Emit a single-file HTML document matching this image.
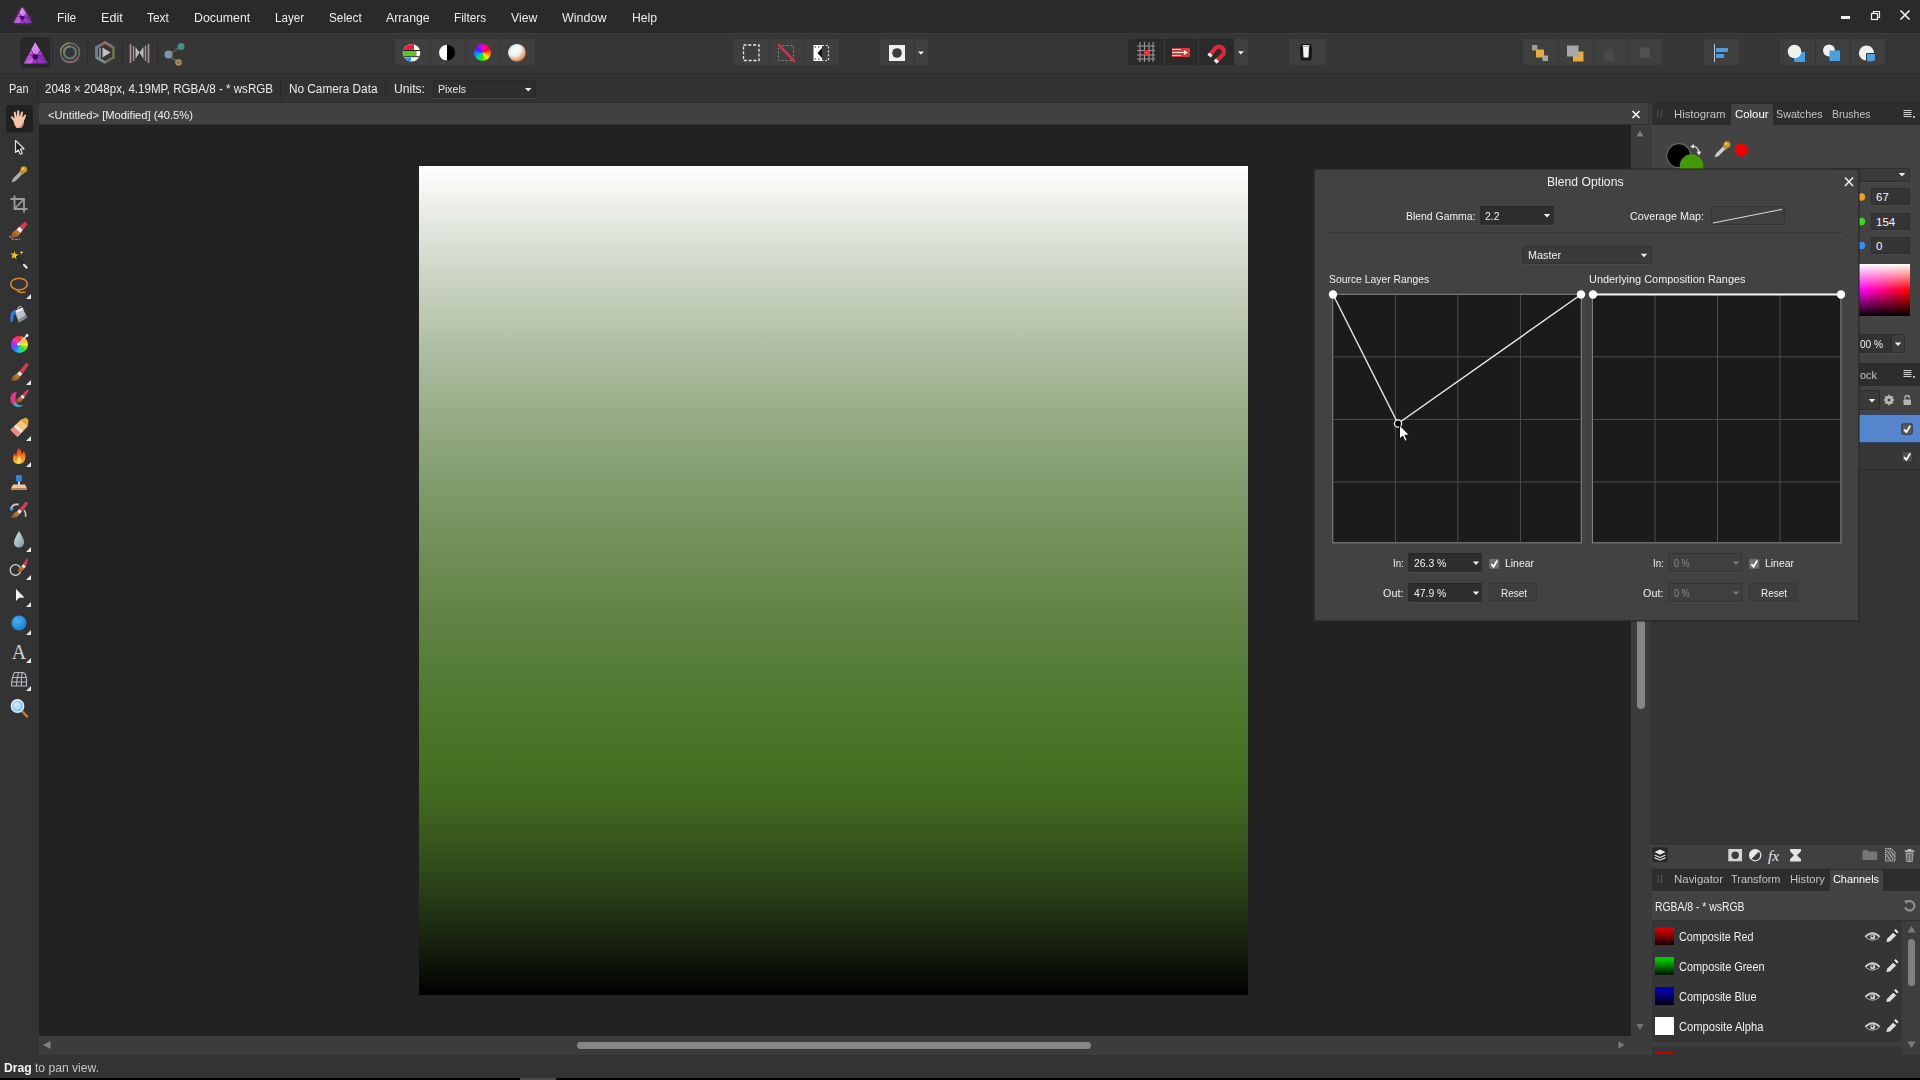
<!DOCTYPE html>
<html lang="en">
<head>
<meta charset="utf-8">
<title>Affinity Photo - Blend Options</title>
<style>
*{box-sizing:border-box;margin:0;padding:0}
html,body{width:1920px;height:1080px;overflow:hidden;background:#363636}
body{font-family:"Liberation Sans",sans-serif;font-size:12px;color:#e6e6e6;position:relative}
.abs{position:absolute}
svg{position:absolute;overflow:visible}
.t{position:absolute;white-space:nowrap;line-height:16px;height:16px;transform-origin:0 50%}
.m{top:10px;font-size:12px;color:#ececec}
#menubar{left:0;top:0;width:1920px;height:33px;background:#2a2a2a}
#toolbar{left:0;top:33px;width:1920px;height:41px;background:#363636;border-top:1px solid #3d3d3d;border-bottom:1px solid #2a2a2a}
#ctxbar{left:0;top:74px;width:1920px;height:29px;background:#323232;border-bottom:1px solid #2b2b2b}
#tools{left:0;top:103px;width:39px;height:952px;background:#333333}
#doctab{left:39px;top:103px;width:1609px;height:22px;background:#404040}
#view{left:39px;top:125px;width:1593px;height:911px;background:#222222}
#vscroll{left:1632px;top:125px;width:16px;height:911px;background:#3a3a3a}
#hscroll{left:39px;top:1036px;width:1609px;height:19px;background:#3a3a3a}
#canvas{left:419px;top:166px;width:829px;height:829px;background:linear-gradient(to bottom,rgb(255,255,255) 0%,rgb(245,247,243) 2.5%,rgb(235,238,232) 5%,rgb(225,231,221) 7.5%,rgb(216,223,210) 10%,rgb(207,216,200) 12.5%,rgb(198,209,189) 15%,rgb(189,202,179) 17.5%,rgb(181,196,170) 20%,rgb(173,189,161) 22.5%,rgb(166,184,152) 25%,rgb(158,178,143) 27.5%,rgb(151,172,135) 30%,rgb(144,167,127) 32.5%,rgb(138,162,119) 35%,rgb(132,158,112) 37.5%,rgb(126,153,104) 40%,rgb(120,149,98) 42.5%,rgb(115,145,91) 45%,rgb(109,141,85) 47.5%,rgb(104,138,79) 50%,rgb(100,134,73) 52.5%,rgb(95,131,67) 55%,rgb(91,128,62) 57.5%,rgb(86,125,57) 60%,rgb(82,122,52) 62.5%,rgb(79,120,47) 65%,rgb(75,118,42) 67.5%,rgb(72,115,38) 70%,rgb(69,113,34) 72.5%,rgb(65,108,32) 75%,rgb(62,100,32) 77.5%,rgb(57,92,31) 80%,rgb(52,83,29) 82.5%,rgb(47,73,27) 85%,rgb(41,62,24) 87.5%,rgb(34,51,20) 90%,rgb(26,39,16) 92.5%,rgb(18,27,11) 95%,rgb(9,14,6) 97.5%,rgb(0,0,0) 100%)}
#rpanel{left:1648px;top:103px;width:272px;height:952px;background:#3b3b3b}
#status{left:0;top:1055px;width:1920px;height:23px;background:#363636}
#bottom{left:0;top:1078px;width:1920px;height:2px;background:#000}
#dialog{left:1315px;top:170px;width:543px;height:450px;background:#424242;box-shadow:0 0 0 1px #2c2c2c}
.grp{position:absolute;top:5px;height:26px;background:#3f3f3f;border-radius:2px}
.grp.dk{background:#2a2a2a}
.sep{position:absolute;top:0;width:1px;height:26px;background:#363636}
.dk .sep{background:#3a3a3a}
.c{top:7px;font-size:12px;color:#ececec}
.dd{background:#2e2e2e;border:1px solid #282828;border-radius:2px;box-shadow:0 1px 0 #484848}
#doctab{left:39px;top:103px;width:1609px;height:22px;background:#414141;border-bottom:1px solid #2f2f2f}
#view{left:39px;top:125px;width:1592px;height:911px;background:#222222}
#vscroll{left:1631px;top:125px;width:19px;height:911px;background:#3c3c3c}
#hscroll{left:39px;top:1036px;width:1611px;height:19px;background:#3c3c3c}
.thumb{position:absolute;background:#868686;border-radius:4px}
#status{left:0;top:1055px;width:1920px;height:23px;background:#333333}
#rpanel{left:1650px;top:103px;width:270px;height:952px;background:#3c3c3c}
.rp{position:absolute}
.tabs{position:absolute;left:4px;width:268px;height:22px;background:#2d2d2d}
.tab{position:absolute;top:1px;height:21px;background:#434343;border-radius:2px 2px 0 0}
.tt{font-size:11px;color:#c4c4c4;top:3.500px}
.tt.on{color:#ffffff}
.nf{position:absolute;border-radius:2px;box-shadow:inset 0 0 0 1px #2e2e2e,0 1px 0 #4a4a4a}
.ch{font-size:12px;color:#f0f0f0}
#dialog{left:1315px;top:169.500px;width:542.500px;height:450px;background:#424242;box-shadow:0 0 0 1px #303030,0 0 0 2px rgba(40,40,40,.55)}
.d{font-size:11px;color:#f0f0f0}
.fld{position:absolute;background:#2d2d2d;border-radius:2px;box-shadow:0 1px 0 #4c4c4c, inset 0 1px 0 #262626}
.fld.dis{background:#3f3f3f;box-shadow:0 1px 0 #4a4a4a, inset 0 0 0 1px #353535}
.btn{position:absolute;background:#3e3e3e;border-radius:2px;box-shadow:inset 0 0 0 1px #383838,0 1px 0 #4a4a4a}
.cb{position:absolute;width:10px;height:10px;background:#6c6c6c;border-radius:1.500px}

</style>
</head>
<body>
<div id="menubar" class="abs">
<svg style="left:0;top:0;filter:drop-shadow(0 0 1.500px rgba(170,70,230,.9))" width="40" height="33" viewBox="0 0 40 33"><defs><linearGradient id="lg1" x1="0" y1="0" x2="1" y2="1"><stop offset="0" stop-color="#f29af8"/><stop offset=".5" stop-color="#c050e6"/><stop offset="1" stop-color="#8a2cc0"/></linearGradient></defs><path d="M22.3 7.3 L31.8 22.8 L13.8 22.8Z" fill="url(#lg1)"/><path d="M22.3 7.3 L19.2 12.9 L22.6 17.6 L26.1 13.5Z" fill="#f0a8f8" opacity=".55"/><path d="M13.8 22.8 L20.3 22.8 L22.6 17.6Z" fill="#e080f0" opacity=".5"/><path d="M31.8 22.8 L28.4 17.2 L22.6 17.6Z" fill="#7a20a8" opacity=".55"/><path d="M19.2 12.9 L24.6 22.8 M20.3 22.8 L26.1 13.5 M28.4 17.2 L17.2 16.6" stroke="#5a1486" stroke-width=".9" fill="none" opacity=".85"/><circle cx="22.2" cy="17.9" r="2.1" fill="#3a0c58"/></svg>
<span class="t m" style="transform:scaleX(0.9926);left:57.3px">File</span><span class="t m" style="transform:scaleX(1.0489);left:101.3px">Edit</span><span class="t m" style="transform:scaleX(0.9947);left:147.3px">Text</span><span class="t m" style="transform:scaleX(1.0274);left:194.3px">Document</span><span class="t m" style="transform:scaleX(0.9657);left:275.3px">Layer</span><span class="t m" style="transform:scaleX(0.9802);left:328.8px">Select</span><span class="t m" style="transform:scaleX(1.0233);left:385.8px">Arrange</span><span class="t m" style="transform:scaleX(0.9856);left:454.3px">Filters</span><span class="t m" style="transform:scaleX(1.0195);left:511.3px">View</span><span class="t m" style="transform:scaleX(1.0401);left:562.3px">Window</span><span class="t m" style="transform:scaleX(1.0167);left:632.3px">Help</span>
<svg style="left:1836px;top:6px" width="80" height="20" viewBox="0 0 80 20"><rect x="5" y="10" width="9" height="3" fill="#f0f0f0"/><rect x="35.5" y="7.5" width="6" height="6" fill="none" stroke="#f0f0f0" stroke-width="1.2"/><path d="M37.5 7.5V5.500H43.500V11.500H41.500" fill="none" stroke="#f0f0f0" stroke-width="1.2"/><path d="M64.500 4.500L73.500 13.500M73.500 4.500L64.500 13.500" stroke="#f0f0f0" stroke-width="1.700"/></svg>
</div>
<div id="toolbar" class="abs"><div class="grp" style="left:395px;width:140px"><i class="sep" style="left:34.5px"></i><i class="sep" style="left:70px"></i><i class="sep" style="left:104.5px"></i></div><div class="grp" style="left:734px;width:104.5px"><i class="sep" style="left:35px"></i><i class="sep" style="left:69.5px"></i></div><div class="grp" style="left:880px;width:48px"><i class="sep" style="left:33.5px"></i></div><div class="grp dk" style="left:1128px;width:105.5px"><i class="sep" style="left:35.5px"></i><i class="sep" style="left:70px"></i></div><div class="grp" style="left:1234px;width:14px"></div><div class="grp" style="left:1289px;width:36.5px"></div><div class="grp" style="left:1523px;width:139px"><i class="sep" style="left:35px"></i><i class="sep" style="left:70px"></i><i class="sep" style="left:105px"></i></div><div class="grp" style="left:1703.5px;width:35px"></div><div class="grp" style="left:1780px;width:104.5px"><i class="sep" style="left:34.5px"></i><i class="sep" style="left:69.5px"></i></div><i class="abs" style="left:473.500px;top:10.200px;width:17px;height:17px;border-radius:50%;background:conic-gradient(from 60deg,#ff0030,#ff8800,#ffee00,#30e000,#00d8a0,#0090ff,#4020ff,#c000ff,#ff0090,#ff0030)"></i><svg style="left:0;top:-1px" width="1920" height="41" viewBox="0 33 1920 41">
<defs>
<linearGradient id="ph" x1="0" y1="0" x2="1" y2="1"><stop offset="0" stop-color="#e9a0f7"/><stop offset=".5" stop-color="#b64ad9"/><stop offset="1" stop-color="#7a2aa8"/></linearGradient>
<radialGradient id="ball" cx=".35" cy=".3" r=".8"><stop offset="0" stop-color="#ffffff"/><stop offset=".45" stop-color="#f2f2f2"/><stop offset=".8" stop-color="#e0a070"/><stop offset="1" stop-color="#b06a3a"/></radialGradient>
<linearGradient id="ballb" x1="0" y1="0" x2="1" y2="1"><stop offset="0" stop-color="#4aa8e8"/><stop offset=".35" stop-color="#ffffff" stop-opacity="0"/></linearGradient>
</defs>
<!-- persona: photo (selected) -->
<rect x="21" y="38.200" width="28.500" height="28.600" rx="3" fill="#292929" stroke="#242424" stroke-width="1"/>
<path d="M35.2 42.3 L47.8 63.4 L23.8 63.4Z" fill="url(#ph)"/><path d="M35.2 42.3 L31.1 49.9 L35.6 56.4 L40.2 50.7Z" fill="#f0a8f8" opacity=".55"/><path d="M23.8 63.4 L32.4 63.4 L35.6 56.4Z" fill="#e080f0" opacity=".5"/><path d="M47.8 63.4 L43.3 55.8 L35.6 56.4Z" fill="#7a20a8" opacity=".55"/><path d="M31.1 49.9 L38.2 63.4 M32.4 63.4 L40.2 50.7 M43.3 55.8 L28.4 55.0" stroke="#5a1486" stroke-width=".9" fill="none" opacity=".85"/><circle cx="35.2" cy="56.7" r="2.8" fill="#3a0c58"/>
<!-- separators -->
<path d="M52.500 41V66M87.500 41V66M122.500 41V66M157.500 41V66" stroke="#2e2e2e" stroke-width="1"/>
<g opacity=".78"><!-- liquify -->
<circle cx="70" cy="52.500" r="9.500" fill="none" stroke="#8c7a6a" stroke-width="1.600"/>
<path d="M60.500 52.500 A9.500 9.500 0 0 1 70 43" fill="none" stroke="#a89a62" stroke-width="1.600"/>
<path d="M62 58 A9.500 9.500 0 0 0 78 58" fill="none" stroke="#a8707a" stroke-width="1.600"/>
<circle cx="70" cy="52.500" r="6" fill="none" stroke="#6f8a8c" stroke-width="2.200"/>
<path d="M64 52.500 A6 6 0 0 1 70 46.500" fill="none" stroke="#8aa07a" stroke-width="2.200"/>
<circle cx="70" cy="52.500" r="4" fill="#30383c"/>
<!-- develop -->
<path d="M105 42.500 L113.500 47.500 L113.500 57.500 L105 62.500 L96.500 57.500 L96.500 47.500Z" fill="none" stroke="#7d8a5a" stroke-width="2.600" stroke-linejoin="round"/>
<path d="M96.500 57.500 L96.500 47.500 L100 45.500" fill="none" stroke="#7f93b0" stroke-width="2.800"/>
<path d="M100 45.500 L105 42.500 L112 46.500" fill="none" stroke="#a87a78" stroke-width="2.600"/>
<path d="M96.500 57.500 L105 62.500" fill="none" stroke="#8fa6b8" stroke-width="2.600"/>
<path d="M102.500 47.500 L110.500 52.500 L102.500 57.500Z" fill="#e8e8e8"/>
<path d="M100 48V58" stroke="#c8c8d0" stroke-width="1.400"/>
<!-- tone mapping -->
<path d="M130.500 44V63M148.500 44V63" stroke="#d0b0b0" stroke-width="1.600"/>
<path d="M133.500 46V61M145.500 46V61" stroke="#b8b8c4" stroke-width="1.400"/>
<path d="M135.500 47 L139.500 52.500 L135.500 59Z M143.500 47 L139.500 52.500 L143.500 59Z" fill="#e4e4e4"/>
<!-- export -->
<path d="M168 55 L181 46.500 M168 55 L178.500 62.500" stroke="#5a6a66" stroke-width="1.600"/>
<circle cx="168.500" cy="54.500" r="4" fill="#8fb4c8"/>
<circle cx="181" cy="46.500" r="3.500" fill="#4aa89a"/>
<circle cx="178.500" cy="62.500" r="3.300" fill="#c8a468"/>
<circle cx="178.500" cy="62.500" r="1.200" fill="#8a6a3a"/></g>
</svg><svg style="left:0;top:-1px" width="1920" height="41" viewBox="0 33 1920 41">
<defs>
<clipPath id="c1"><circle cx="411.500" cy="52.700" r="8.800"/></clipPath>
<clipPath id="c2"><circle cx="447" cy="52.700" r="7.900"/></clipPath>
</defs>
<!-- levels-like icon -->
<g clip-path="url(#c1)"><rect x="402" y="43" width="20" height="20" fill="#ffffff"/><rect x="402" y="43" width="12" height="7.500" fill="#e8204a"/><rect x="402" y="50.500" width="14.500" height="5.600" fill="#58c822"/><rect x="402" y="57.500" width="9" height="6" fill="#2a9ae8"/><path d="M402 50.500H422M402 56.700H422" stroke="#222" stroke-width="1"/></g>
<!-- b/w -->
<circle cx="447" cy="52.700" r="8.800" fill="#3a3a3a"/>
<g clip-path="url(#c2)"><rect x="437" y="43" width="10" height="20" fill="#ffffff"/><rect x="447" y="43" width="11" height="20" fill="#000000"/></g>
<!-- hsl wheel -->

<!-- white balance ball -->
<circle cx="517" cy="52.700" r="8.800" fill="url(#ball)"/>
<circle cx="517" cy="52.700" r="8.800" fill="url(#ballb)"/>
<!-- selection icons -->
<rect x="743.500" y="45" width="15.500" height="15.500" fill="none" stroke="#e6e6e6" stroke-width="1.300" stroke-dasharray="3 1.800"/>
<rect x="778.500" y="45.500" width="15" height="15" fill="none" stroke="#8a8a8a" stroke-width="1" stroke-dasharray="2 2"/>
<path d="M779 45 L794 61" stroke="#d8344e" stroke-width="2.400" stroke-linecap="round"/>
<rect x="813.500" y="45" width="8.500" height="16" fill="#ffffff"/>
<path d="M822 48 L817.500 53 L822 58Z" fill="#101020"/>
<path d="M822 45.500H828.500V60.500H822" fill="none" stroke="#e0e0e0" stroke-width="1.200" stroke-dasharray="2 1.800"/>
<path d="M814.500 47h1.500m2 0h1.500M814.500 59h1.500m2 0h1.500" stroke="#222" stroke-width="1"/>
<!-- quick mask -->
<rect x="889" y="45" width="16" height="16" fill="#f0f0ee"/>
<circle cx="897" cy="53" r="4.800" fill="#3c3c3a"/>
<path d="M918 51.500h6l-3 3.200z" fill="#f0f0f0"/>
<!-- snapping group -->
<path d="M1140 42V62M1144.500 42V62M1149 42V62M1153 42V62M1137 46H1155M1137 50.500H1155M1137 55H1155M1137 59H1155" stroke="#9a9a9a" stroke-width="1.100"/>
<rect x="1144" y="50" width="5" height="5" fill="#e03c3c"/>
<rect x="1172" y="48" width="18" height="9" fill="#d83a3a"/>
<path d="M1172 49.500H1181M1172 52.500H1187M1172 55.500H1181" stroke="#e8e8e8" stroke-width="1.200"/>
<path d="M1184 50 L1188 52.500 L1184 55" fill="#e8e8e8"/>
<path d="M1210 55 L1216 47.500 A5.200 5.200 0 0 1 1223.500 54 L1216.500 61" fill="none" stroke="#d8283e" stroke-width="4.300"/>
<path d="M1209 56.200 L1211 53.800" stroke="#f0f0f0" stroke-width="4.300"/><path d="M1215.200 62.200 L1217.500 60" stroke="#f0f0f0" stroke-width="4.300"/>
<path d="M1237.800 51.300h6l-3 3.200z" fill="#f0f0f0"/>
<!-- assistant -->
<path d="M1301 44 H1311 Q1313 50 1311 60.500 H1301 Q1299 50 1301 44Z" fill="#161616"/>
<path d="M1303 46.500 H1309 L1308.500 57.500 H1303.500Z" fill="#f4f4f4"/>
<rect x="1302.500" y="45" width="7" height="1.500" fill="#d8d8d8"/>
<!-- arrange -->
<rect x="1532" y="45" width="5.500" height="5.500" fill="#9a9a9a"/><rect x="1536" y="49.500" width="8" height="8" fill="#e8ac3c"/><rect x="1542.500" y="55.500" width="5.500" height="5.500" fill="#a8a8a8"/>
<rect x="1573" y="51.500" width="10.500" height="10" fill="#e8ac3c"/><rect x="1567" y="45.500" width="11.500" height="11" fill="#a8a8a8"/>
<rect x="1604" y="52" width="10" height="9" fill="#4a4a4a"/><rect x="1607" y="49" width="6" height="4" fill="#484848"/>
<rect x="1640" y="47.500" width="10" height="10" fill="#505050"/>
<!-- align -->
<path d="M1714.500 44V62" stroke="#c8c8c8" stroke-width="1"/><rect x="1716" y="48" width="12" height="4" fill="#4aa0e0"/><rect x="1716" y="54" width="8" height="4" fill="#4aa0e0"/>
<!-- boolean ops -->
<rect x="1794" y="52" width="11" height="10" fill="#4aa0e0"/><circle cx="1794.500" cy="51.500" r="6.800" fill="#f0f0f0"/>
<circle cx="1829" cy="50.500" r="6" fill="#f0f0f0"/><rect x="1829.500" y="50.500" width="10.500" height="10.500" fill="#4aa0e0"/>
<circle cx="1866.500" cy="53" r="7.600" fill="#f0f0f0"/><path d="M1867 53.500h8v6.500a9 9 0 0 1-8 1z" fill="#4aa0e0"/><path d="M1866.500 53.500H1875M1866.500 53.500V61" stroke="#333" stroke-width="1"/>
</svg></div>
<div id="ctxbar" class="abs">
<span class="t c" style="transform:scaleX(0.9129);left:9px">Pan</span>
<i class="abs" style="left:37px;top:4px;width:1px;height:22px;background:#292929"></i>
<span class="t c" style="transform:scaleX(0.9651);left:44.500px">2048 × 2048px, 4.19MP, RGBA/8 - * wsRGB</span>
<i class="abs" style="left:280px;top:4px;width:1px;height:22px;background:#292929"></i>
<span class="t c" style="transform:scaleX(0.9828);left:288.500px">No Camera Data</span>
<i class="abs" style="left:385px;top:4px;width:1px;height:22px;background:#292929"></i>
<span class="t c" style="transform:scaleX(1.0102);left:393.500px">Units:</span>
<div class="abs dd" style="left:433px;top:6px;width:103px;height:18px"><span class="t" style="transform:scaleX(0.9124);left:3.500px;top:0;font-size:11.500px">Pixels</span><svg style="left:91px;top:7px" width="7" height="4" viewBox="0 0 7 4"><path d="M0 0h6.500l-3.250 3.500z" fill="#f0f0f0"/></svg></div>
</div>
<div id="tools" class="abs"><i class="abs" style="left:10.500px;top:232.500px;width:17px;height:17px;border-radius:50%;background:conic-gradient(from 0deg,#ff3030,#ffb020,#f0f020,#40e020,#20d0c0,#3070ff,#a030ff,#ff30b0,#ff3030)"></i><svg style="left:0;top:0" width="39" height="952" viewBox="0 103 39 952">
<defs>
<linearGradient id="wood" x1="0" y1="1" x2="1" y2="0"><stop offset="0" stop-color="#8a4a18"/><stop offset="1" stop-color="#d88a3a"/></linearGradient>
<radialGradient id="bl" cx=".4" cy=".35" r=".7"><stop offset="0" stop-color="#4ab0f0"/><stop offset="1" stop-color="#1a78c8"/></radialGradient>
<radialGradient id="lens" cx=".4" cy=".4" r=".7"><stop offset="0" stop-color="#cfe8ff"/><stop offset="1" stop-color="#6ab4f0"/></radialGradient>
<linearGradient id="drop" x1="0" y1="0" x2="1" y2="1"><stop offset="0" stop-color="#d8e8ea"/><stop offset="1" stop-color="#7a9aa0"/></linearGradient>
<linearGradient id="flame" x1="0" y1="0" x2="0" y2="1"><stop offset="0" stop-color="#e83a10"/><stop offset=".6" stop-color="#f88a18"/><stop offset="1" stop-color="#f8c838"/></linearGradient>
</defs>
<!-- hand (selected) -->
<rect x="6" y="105" width="27" height="27.500" rx="3" fill="#212121"/>
<path d="M13.500 121 L10.800 117.500 Q10.500 116 12 116.200 L14.500 118.500 L13.800 112 Q14.500 110.800 15.600 112 L16.800 117 L17.200 110.800 Q18.200 109.600 19.200 110.800 L19.600 117 L21.200 111.800 Q22.300 110.800 23 112.200 L22.200 118 L24.800 114.500 Q26 114 26.200 115.500 L24 121 Q23.500 126 21 128 L16.500 128 Q14 125 13.500 121Z" fill="#f2c6a4"/>
<path d="M16.500 128 L21 128 Q23.500 126 24 121 L22 124 Q19 127 16.500 128Z" fill="#d89a78"/>
<!-- move -->
<path d="M15.500 140.500 V152.500 L18.300 150 L20.300 154.300 L22.300 153.300 L20.400 149.200 L24 148.800Z" fill="#1c1c1c" stroke="#e0e0e0" stroke-width="1.200" stroke-linejoin="round"/>
<!-- eyedropper -->
<path d="M11.500 182.500 L13 178.500 L20 171.500 L22.500 174 L15.500 181Z" fill="#a8aeb4"/>
<path d="M19.500 171.500 L22.500 174.500 L24 173.500 L20.800 170Z" fill="#c8962c"/>
<circle cx="23.800" cy="169.600" r="3.300" fill="#c8962c"/><circle cx="23" cy="168.800" r="1.300" fill="#e8c468"/>
<!-- crop -->
<path d="M14.500 195.500 V209 H27.500 M10.500 199 H24 V212.500 M14.500 209 L24 199" fill="none" stroke="#9c9c9c" stroke-width="1.800"/>
<!-- selection brush -->
<path d="M9.500 236 A7 4.500 0 0 0 20 239" fill="none" stroke="#d8d8d8" stroke-width="1" stroke-dasharray="2 1.500"/>
<path d="M11 237.500 Q10.500 232.500 16.500 229.500 L20.500 233 Q18 238.500 11 237.500Z" fill="url(#wood)"/>
<path d="M16.500 229.500 L19.500 226.500 L23 229.800 L20.500 233Z" fill="#e8e8e8"/>
<path d="M19.500 226.500 L24.500 222 Q27 221.500 27.500 224.500 L23 229.800Z" fill="#d83a4e"/>
<!-- magic wand -->
<path d="M16.500 257 L26.500 267.500" stroke="#2a2a2a" stroke-width="3" stroke-linecap="round"/>
<path d="M24 264.800 L26.500 267.500" stroke="#e0e0e0" stroke-width="2.400" stroke-linecap="round"/>
<path d="M14.500 251 L15.600 254 L18.800 254.600 L16 256.300 L16.500 259.500 L14.200 257.300 L11.300 258.600 L12.600 255.700 L10.500 253.300 L13.600 253.700Z" fill="#f0c030"/>
<path d="M21.500 250.500 l.6 1.400 l1.400 .6 l-1.400 .6 l-.6 1.400 l-.6 -1.400 l-1.400 -.6 l1.400 -.6z" fill="#f0d060"/>
<!-- lasso -->
<ellipse cx="19" cy="284" rx="8.300" ry="5.800" fill="none" stroke="#d8842c" stroke-width="1.600"/>
<path d="M17 289.500 Q18 293.500 25.500 292" fill="none" stroke="#d8842c" stroke-width="1.500"/>
<path d="M31 294 V299 H26Z" fill="#e8e8e8"/>
<!-- flood fill -->
<path d="M14.500 311 L22.500 307.500 L27 317.500 L19 322.500Z" fill="#b8c2c8"/>
<path d="M14.500 311 L22.500 307.500 L23.500 309.500 L15.500 313.500Z" fill="#e8ecf0"/>
<path d="M19 322.500 L27 317.500 L26 315 L18 320Z" fill="#7a8a94"/>
<path d="M17.500 309 Q18.500 305 21.500 307" fill="none" stroke="#d0d0d0" stroke-width="1"/>
<path d="M15 310 Q9 311 10.500 321.500 Q12.500 324 13.500 318 Q13.500 314 16.500 313Z" fill="#2a7ae0"/>
<!-- gradient/colour wheel -->

<path d="M18.500 344 L27 335.500" stroke="#e8e8e8" stroke-width="1.500"/><circle cx="18.500" cy="344" r="1.600" fill="#f4f4f4"/><circle cx="27" cy="335.500" r="1.400" fill="#f4f4f4"/>
<!-- paint brush -->
<path d="M11.500 381 Q11 376.500 17 373.500 L20 376.500 Q18 381.500 11.500 381Z" fill="url(#wood)"/>
<path d="M17 373.500 L19.500 371 L22.500 374 L20 376.500Z" fill="#e8e8e8"/>
<path d="M19.500 371 L26 363 Q28.500 362.500 28.500 365 L22.500 374Z" fill="#d83a4e"/>
<path d="M31 380 V385 H26Z" fill="#e8e8e8"/>
<!-- colour replacement brush -->
<path d="M17 391.500 Q9.500 392.500 10.500 400.500 Q12 407.500 21 406.500 Q15 404 15.500 399 Q15.500 394.500 17 391.500Z" fill="#e0388a"/>
<path d="M13 404.500 Q17 409 23.500 405.500 Q18 406 15.500 402Z" fill="#3aa8e0"/>
<path d="M16 402.500 Q15.500 398.500 20.500 396.500 L23 399 Q21.500 403 16 402.500Z" fill="url(#wood)"/>
<path d="M20.500 396.500 L22.500 394.500 L25 397 L23 399Z" fill="#e8e8e8"/>
<path d="M22.500 394.500 L27 389.500 Q28.500 389.500 28.500 391 L25 397Z" fill="#d83a4e"/>
<!-- eraser -->
<path d="M10.500 430 L21 419.500 L28 426 L17.500 437Z" fill="#f0c878"/>
<path d="M21 419.500 L26 417.500 L28.500 420 L28 426Z" fill="#e8a83a"/>
<path d="M10.500 430 L14 426.500 L21 433 L17.500 437Z" fill="#f08a8a"/>
<path d="M14 426.500 L16 424.500 L23 431 L21 433Z" fill="#e8e8e8"/>
<path d="M31 436 V441 H26Z" fill="#e8e8e8"/>
<!-- burn -->
<path d="M19 448 Q22 451 21.500 454 Q24 452.500 23.500 450.500 Q27 456 24.500 461 Q22 464.500 18.500 464 Q14 464 13 459.500 Q12.500 456 15 453 Q15 456 16.500 456.500 Q16 451.500 19 448Z" fill="url(#flame)"/>
<path d="M19 456 Q22 459 20.500 462.500 Q19 464 17.500 462.500 Q16 460 19 456Z" fill="#fce070"/>
<path d="M31 462 V467 H26Z" fill="#e8e8e8"/>
<!-- clone stamp -->
<rect x="16" y="475" width="6" height="6.500" rx="1" fill="#2a86d8"/>
<path d="M18 481.500 h2 v3.500 h-2z" fill="#d8d8d8"/>
<path d="M13 484.500 H25 L27 488.500 H11Z" fill="#f0c8a0"/>
<path d="M11 488.500 H27 V490 H11Z" fill="#d88a3a"/>
<!-- undo brush -->
<path d="M11 509.500 Q12 503.500 18.500 504.500" fill="none" stroke="#c8d4e0" stroke-width="1.800"/>
<path d="M9.500 507.500 L11 511.500 L14 508.500Z" fill="#4a9ae0"/>
<path d="M24 510 Q26.500 513 25.500 517" fill="none" stroke="#c8c8c8" stroke-width="1.400"/>
<path d="M11.500 518 Q11.500 514 17 511.500 L19.500 514 Q17.500 518.500 11.500 518Z" fill="url(#wood)"/>
<path d="M17 511.500 L19.500 509 L22 511.500 L19.500 514Z" fill="#e8e8e8"/>
<path d="M19.500 509 L25.500 502 Q28 501.500 28 504 L22 511.500Z" fill="#d83a4e"/>
<!-- blur -->
<path d="M19 531 Q25 540 24 543.500 Q22.500 547.500 19 547.500 Q15 547.500 14 543.500 Q13.500 540 19 531Z" fill="url(#drop)"/>
<path d="M31 547 V552 H26Z" fill="#e8e8e8"/>
<!-- inpainting -->
<circle cx="15.500" cy="570" r="5.300" fill="none" stroke="#d8d8d8" stroke-width="1.200"/>
<path d="M17.500 572 Q17.500 568 21.500 566 L24 568.500 Q22.500 572.500 17.500 572Z" fill="url(#wood)"/>
<path d="M21.500 566 L23.500 564 L26 566.500 L24 568.500Z" fill="#e8e8e8"/>
<path d="M23.500 564 L26.500 558.500 Q28 558 28 560 L26 566.500Z" fill="#d83a4e"/>
<path d="M31 575 V580 H26Z" fill="#e8e8e8"/>
<!-- node tool -->
<path d="M16 589 V601 L19.200 597.800 L24.500 597.500Z" fill="#f4f4f4"/>
<path d="M31 602 V607 H26Z" fill="#e8e8e8"/>
<!-- ellipse -->
<circle cx="19" cy="623" r="7.600" fill="url(#bl)"/>
<path d="M31 630 V635 H26Z" fill="#e8e8e8"/>
<!-- text -->
<text x="19" y="658.500" text-anchor="middle" font-family="Liberation Serif,serif" font-size="20" fill="#d4d4d4">A</text>
<path d="M31 658 V663 H26Z" fill="#e8e8e8"/>
<!-- mesh warp -->
<path d="M14.500 672.500 H23 Q26.500 674 26.500 680 V686 H11.500 Q11.500 678 14.500 672.500Z M13 677.500 H26 M12 682 H26.500 M18.500 672.500 Q16.500 679 16.500 686 M22 672.500 Q21 679 21.500 686" fill="none" stroke="#b8b8c4" stroke-width="1.100"/>
<path d="M31 686 V691 H26Z" fill="#e8e8e8"/>
<!-- zoom -->
<path d="M22 711 L27 716.500" stroke="#c87a3a" stroke-width="2.400" stroke-linecap="round"/>
<circle cx="17.500" cy="706" r="6.200" fill="url(#lens)" stroke="#e4eef8" stroke-width="1.400"/>
<circle cx="17.500" cy="706" r="2.500" fill="none" stroke="#e8f4ff" stroke-width=".8" opacity=".8"/>
</svg></div>
<div id="doctab" class="abs"><span class="t" style="transform:scaleX(1.0178);left:9px;top:4px;font-size:11px;color:#f0f0f0">&lt;Untitled&gt; [Modified] (40.5%)</span>
<svg style="left:1593px;top:8px" width="8" height="7" viewBox="0 0 8 7"><path d="M.5 0L7.500 7M7.500 0L.5 7" stroke="#f4f4f4" stroke-width="1.600"/></svg></div>
<div id="view" class="abs"></div>
<div id="canvas" class="abs"></div>
<div id="vscroll" class="abs"><svg style="left:0;top:0" width="17" height="911" viewBox="1631 125 17 911"><path d="M1636.500 136.500h7l-3.500-6z" fill="#7c7c7c"/><path d="M1636.500 1024h7l-3.500 6z" fill="#767676"/></svg><i class="thumb" style="left:6px;top:380px;width:7.500px;height:204.300px"></i></div>
<div id="hscroll" class="abs"><svg style="left:0;top:0" width="1609" height="19" viewBox="39 1036 1609 19"><path d="M50.500 1041v8l-7.500-4z" fill="#828282"/><path d="M1618.500 1041.500v7l6-3.500z" fill="#7c7c7c"/></svg><i class="thumb" style="left:538px;top:5.800px;width:514px;height:7.500px"></i></div>
<div id="rpanel" class="abs"><i class="rp" style="left:2px;top:22px;width:268px;height:238px;background:#434343;"></i><i class="rp" style="left:2px;top:0px;width:268px;height:22px;background:#2d2d2d;"></i><i class="rp" style="left:81px;top:1px;width:41.5px;height:21px;background:#434343;border-radius:2px 2px 0 0"></i><span class="t tt" style="transform:scaleX(1.0274);left:23.7px;top:2.5px;">Histogram</span><span class="t tt on" style="transform:scaleX(1.0338);left:84.5px;top:2.5px;">Colour</span><span class="t tt" style="transform:scaleX(0.9748);left:126px;top:2.5px;">Swatches</span><span class="t tt" style="transform:scaleX(0.9539);left:182px;top:2.5px;">Brushes</span><i class="rp" style="left:2px;top:260px;width:268px;height:22.5px;background:#2d2d2d;"></i><i class="rp" style="left:0px;top:282.5px;width:270px;height:28.5px;background:#434343;"></i><i class="rp" style="left:0px;top:311px;width:270px;height:28.5px;background:#5585cb;border-top:1px solid #30466c;border-bottom:1px solid #30466c"></i><i class="rp" style="left:0px;top:339.5px;width:270px;height:27.5px;background:#373737;border-bottom:1px solid #2c2c2c"></i><i class="rp" style="left:0px;top:367px;width:270px;height:375px;background:#343434;"></i><i class="rp" style="left:0px;top:742px;width:270px;height:21.5px;background:#404040;"></i><span class="t tt" style="transform:scaleX(0.9927);left:209.5px;top:263.5px;">ock</span><i class="nf" style="left:188px;top:231px;width:53px;height:18.5px;background:#333;"></i><i class="nf" style="left:241px;top:231px;width:13.5px;height:18.5px;background:#3e3e3e;"></i><span class="t tt" style="transform:scaleX(0.9171);left:209.5px;top:232.5px;color:#f0f0f0">00 %</span><i class="nf" style="left:188px;top:287px;width:41.5px;height:20px;background:#3a3a3a;"></i><i class="nf" style="left:181.5px;top:64.5px;width:78px;height:14px;background:#3a3a3a;"></i><i class="nf" style="left:220.5px;top:85px;width:39px;height:17px;background:#353535;"></i><span class="t tt" style="left:226px;top:86px;color:#f4f4f4;font-size:11.500px">67</span><i class="nf" style="left:220.5px;top:109.5px;width:39px;height:17px;background:#353535;"></i><span class="t tt" style="left:226px;top:110.5px;color:#f4f4f4;font-size:11.500px">154</span><i class="nf" style="left:220.5px;top:133.5px;width:39px;height:17px;background:#353535;"></i><span class="t tt" style="left:226px;top:134.5px;color:#f4f4f4;font-size:11.500px">0</span><i class="rp" style="left:110px;top:161px;width:149.5px;height:51.5px;background:linear-gradient(to bottom,rgba(255,255,255,1),rgba(255,255,255,0) 50%,rgba(0,0,0,0) 50%,rgba(0,0,0,1)),linear-gradient(to right,#00f,#f0f 66%,#f00 99%);"></i><i class="rp" style="left:2px;top:765.5px;width:268px;height:22px;background:#2d2d2d;"></i><i class="rp" style="left:180px;top:766.5px;width:53px;height:21px;background:#434343;border-radius:2px 2px 0 0"></i><i class="rp" style="left:2px;top:787.5px;width:268px;height:30.5px;background:#434343;border-bottom:1px solid #303030"></i><i class="rp" style="left:2px;top:818px;width:250px;height:120.5px;background:#353535;"></i><i class="rp" style="left:2px;top:938.5px;width:268px;height:5.5px;background:#3e3e3e;"></i><i class="rp" style="left:2px;top:944px;width:250px;height:8px;background:#353535;"></i><i class="rp" style="left:252px;top:818px;width:18px;height:126px;background:#3e3e3e;"></i><i class="thumb" style="left:257.5px;top:835.8px;width:7.8px;height:47.2px;background:#808080;border-radius:4px"></i><span class="t tt" style="transform:scaleX(1.0408);left:23.8px;top:767.5px;">Navigator</span><span class="t tt" style="transform:scaleX(0.9956);left:81.4px;top:767.5px;">Transform</span><span class="t tt" style="transform:scaleX(1.0224);left:139.7px;top:767.5px;">History</span><span class="t tt on" style="transform:scaleX(0.9896);left:183.2px;top:767.5px;">Channels</span><span class="t ch" style="transform:scaleX(0.8659);left:4.8px;top:795.5px;">RGBA/8 - * wsRGB</span><i class="rp" style="left:5px;top:823.5px;width:18.5px;height:18.5px;background:linear-gradient(to bottom,#d00000 15%,#1c0000 95%);"></i><span class="t ch" style="transform:scaleX(0.9006);left:28.5px;top:826px;">Composite Red</span><i class="rp" style="left:5px;top:853.5px;width:18.5px;height:18.5px;background:linear-gradient(to bottom,#00c800 15%,#001800 95%);"></i><span class="t ch" style="transform:scaleX(0.9102);left:28.5px;top:856px;">Composite Green</span><i class="rp" style="left:5px;top:883.5px;width:18.5px;height:18.5px;background:linear-gradient(to bottom,#0000b0 15%,#000018 95%);"></i><span class="t ch" style="transform:scaleX(0.9148);left:28.5px;top:886px;">Composite Blue</span><i class="rp" style="left:5px;top:913.5px;width:18.5px;height:18.5px;background:linear-gradient(to bottom,#ffffff 15%,#ffffff 95%);"></i><span class="t ch" style="transform:scaleX(0.9313);left:28.5px;top:916px;">Composite Alpha</span><i class="rp" style="left:5px;top:948.5px;width:18.5px;height:2.5px;background:#d00000;"></i><svg style="left:0;top:0" width="270" height="952" viewBox="1650 103 270 952"><defs><clipPath id="cg"><rect x="1650" y="125" width="270" height="44.500"/></clipPath></defs><path d="M1657.7 109.8v8M1661.2 109.8v8" stroke="#5a5a5a" stroke-width="1"/><rect x="1903.5" y="110" width="8" height="1" fill="#d4d4d4"/><rect x="1903.5" y="112" width="8" height="1" fill="#d4d4d4"/><rect x="1903.5" y="114" width="8" height="1" fill="#d4d4d4"/><rect x="1903.5" y="116" width="8" height="1" fill="#d4d4d4"/><rect x="1913" y="116" width="1.800" height="1.800" fill="#d4d4d4"/><g clip-path="url(#cg)"><circle cx="1678.800" cy="155.700" r="12" fill="#000" stroke="#686868" stroke-width="1.200"/><circle cx="1691.500" cy="166" r="11.800" fill="#439a04"/></g><path d="M1692.500 146.500q5-1 6.500 6" fill="none" stroke="#d0d0d0" stroke-width="1.400"/><path d="M1690.300 146.700l3.400-2.600l.4 4.400z" fill="#e8e8e8"/><path d="M1696.600 151.800l2.600 3.600l2-4z" fill="#e8e8e8"/><path d="M1714.500 157.500l1.500-4l7.500-7.500l2.600 2.600l-7.500 7.500z" fill="#c8ccd0"/><path d="M1722.500 146.500l3.500 3.500l1.600-1.200l-3.800-3.800z" fill="#b88a2c"/><circle cx="1727" cy="144.600" r="3.400" fill="#c8962c"/><circle cx="1726.200" cy="143.800" r="1.300" fill="#e8c870"/><circle cx="1741.200" cy="150" r="6.600" fill="#f00000"/><path d="M1898.800 173h6.400l-3.200 3.400z" fill="#f0f0f0"/><circle cx="1861.500" cy="197" r="3.700" fill="#f0a020"/><circle cx="1861.500" cy="221.500" r="3.700" fill="#40d818"/><circle cx="1861.500" cy="245.500" r="3.700" fill="#3a90f0"/><path d="M1894.800 342.500h6.400l-3.200 3.400z" fill="#f0f0f0"/><rect x="1903.5" y="370" width="8" height="1" fill="#d4d4d4"/><rect x="1903.5" y="372" width="8" height="1" fill="#d4d4d4"/><rect x="1903.5" y="374" width="8" height="1" fill="#d4d4d4"/><rect x="1903.5" y="376" width="8" height="1" fill="#d4d4d4"/><rect x="1913" y="376" width="1.800" height="1.800" fill="#d4d4d4"/><path d="M1868.800 399h6.400l-3.200 3.400z" fill="#f0f0f0"/><circle cx="1889" cy="400" r="3.100" fill="none" stroke="#b8b8b8" stroke-width="2.200"/><path d="M1889 394.800v10.400M1883.800 400h10.400M1885.300 396.300l7.400 7.400M1892.700 396.300l-7.400 7.400" stroke="#b8b8b8" stroke-width="1.700"/><circle cx="1889" cy="400" r="1.500" fill="#434343"/><rect x="1903.500" y="399.500" width="7.500" height="5.500" rx=".8" fill="#b4b4b4"/><path d="M1905 399.500v-1.800a2.200 2.200 0 0 1 4.400 0v.6" fill="none" stroke="#b4b4b4" stroke-width="1.300"/><rect x="1901.800" y="423.8" width="10.500" height="10.500" rx="1.500" fill="#5a5a5a" stroke="#2a2a2a" stroke-width=".8"/><path d="M1904 429.4 l2.400 2.700 l3.800 -6.400" fill="none" stroke="#fff" stroke-width="1.800"/><rect x="1901.800" y="451.5" width="10.500" height="10.500" rx="1.500" fill="#505050" stroke="#2a2a2a" stroke-width=".8"/><path d="M1904 457.1 l2.400 2.700 l3.800 -6.400" fill="none" stroke="#fff" stroke-width="1.800"/><rect x="1652.500" y="847.500" width="15" height="14.500" rx="1" fill="#262626"/><path d="M1660 849.500l5.500 2.600l-5.500 2.600l-5.500-2.600z" fill="#e8e8e8"/><path d="M1654.500 855l5.500 2.600l5.500-2.600M1654.500 857.600l5.500 2.600l5.500-2.600" fill="none" stroke="#d8d8d8" stroke-width="1.200"/><rect x="1728.300" y="849" width="13.700" height="12.300" fill="#d4d4d4"/><circle cx="1735.200" cy="855.200" r="3.700" fill="#3c3c3c"/><circle cx="1755.200" cy="855.200" r="5.600" fill="#3a3a3a" stroke="#e0e0e0" stroke-width="1.300"/><path d="M1751.200 859.200a5.600 5.600 0 0 1 8-8z" fill="#e8e8e8"/><text x="1768" y="860.500" font-family="Liberation Serif,serif" font-style="italic" font-size="15.500" fill="#e8e8e8">fx</text><path d="M1790 849h11v2.200l-4 4l4 4v2.200h-11v-2.200l4-4l-4-4z" fill="#e4e4e4"/><path d="M1862.500 851.500q0-1.600 1.500-1.600h3.600l1.400 1.500h7q1.200 0 1.200 1.200v6.200q0 1.200-1.200 1.200h-12.300q-1.200 0-1.200-1.200z" fill="#777"/><path d="M1885.500 848.500h6l3.500 3.500v9h-9.500z" fill="#5a5a5a" stroke="#d0d0d0" stroke-width="1" stroke-dasharray="1.200 1"/><path d="M1887 850.500l6.500 9M1889.500 849.500l5 7M1886 854l4.500 6.500" stroke="#c4c4c4" stroke-width=".8"/><path d="M1905.500 852.500h8l-.8 9.500h-6.400z" fill="#9a9a9a"/><path d="M1904.800 851h9.400M1907.800 849.800h3.400" stroke="#c8c8c8" stroke-width="1.400"/><path d="M1908 854v7M1911 854v7" stroke="#3a3a3a" stroke-width=".9"/><path d="M1658 875v8M1661.5 875v8" stroke="#5a5a5a" stroke-width="1"/><path d="M1907.300 901.600a4.800 4.800 0 1 1-2.200 5.800" fill="none" stroke="#929292" stroke-width="2"/><path d="M1904.200 900.200l4.600 .2l-2.600 3.800z" fill="#929292"/><path d="M1865.300 936.9q7.200-7.600 14.400 0" fill="none" stroke="#cfcfcf" stroke-width="1.700"/><path d="M1866 937.5q6.500 5.400 13 0" fill="none" stroke="#b4b4b4" stroke-width="1"/><circle cx="1872.700" cy="936.8" r="2.500" fill="#d4d4d4"/><circle cx="1872.300" cy="936.3" r="1.100" fill="#353535"/><path d="M1886.300 941.9l.800-3.200l6.300-6.300l2.900 2.900l-6.300 6.300z" fill="#dedede"/><path d="M1892.700 931.7l2.900 2.900" stroke="#353535" stroke-width="1"/><path d="M1894.200 930.5l1.400-1.400l2.900 2.900l-1.400 1.400z" fill="#f0f0f0"/><path d="M1865.300 966.9q7.200-7.600 14.400 0" fill="none" stroke="#cfcfcf" stroke-width="1.700"/><path d="M1866 967.5q6.500 5.400 13 0" fill="none" stroke="#b4b4b4" stroke-width="1"/><circle cx="1872.700" cy="966.8" r="2.500" fill="#d4d4d4"/><circle cx="1872.300" cy="966.3" r="1.100" fill="#353535"/><path d="M1886.300 971.9l.800-3.200l6.300-6.300l2.900 2.900l-6.300 6.300z" fill="#dedede"/><path d="M1892.700 961.7l2.900 2.900" stroke="#353535" stroke-width="1"/><path d="M1894.200 960.5l1.400-1.400l2.900 2.900l-1.400 1.400z" fill="#f0f0f0"/><path d="M1865.300 996.9q7.200-7.600 14.400 0" fill="none" stroke="#cfcfcf" stroke-width="1.700"/><path d="M1866 997.5q6.500 5.400 13 0" fill="none" stroke="#b4b4b4" stroke-width="1"/><circle cx="1872.700" cy="996.8" r="2.500" fill="#d4d4d4"/><circle cx="1872.300" cy="996.3" r="1.100" fill="#353535"/><path d="M1886.300 1001.9l.800-3.200l6.300-6.300l2.900 2.900l-6.300 6.300z" fill="#dedede"/><path d="M1892.700 991.7l2.900 2.900" stroke="#353535" stroke-width="1"/><path d="M1894.200 990.5l1.400-1.400l2.900 2.900l-1.400 1.400z" fill="#f0f0f0"/><path d="M1865.300 1026.9q7.200-7.600 14.400 0" fill="none" stroke="#cfcfcf" stroke-width="1.700"/><path d="M1866 1027.5q6.500 5.400 13 0" fill="none" stroke="#b4b4b4" stroke-width="1"/><circle cx="1872.700" cy="1026.8" r="2.500" fill="#d4d4d4"/><circle cx="1872.300" cy="1026.3" r="1.100" fill="#353535"/><path d="M1886.300 1031.9l.800-3.200l6.300-6.300l2.900 2.900l-6.300 6.300z" fill="#dedede"/><path d="M1892.700 1021.7l2.900 2.900" stroke="#353535" stroke-width="1"/><path d="M1894.200 1020.5l1.400-1.400l2.900 2.900l-1.400 1.400z" fill="#f0f0f0"/><path d="M1907.500 932.500h8l-4-6.500z" fill="#7a7a7a"/><path d="M1907.500 1041.500h8l-4 6.500z" fill="#7a7a7a"/></svg></div>
<div id="status" class="abs"><b class="t" style="transform:scaleX(1.0167);left:4.200px;top:4.500px;font-size:12px;color:#f4f4f4">Drag</b><span class="t" style="transform:scaleX(1.0099);left:34.600px;top:4.500px;font-size:12px;color:#c4c4c4">to pan view.</span></div>
<div id="bottom" class="abs"><i class="abs" style="left:520px;top:0;width:36px;height:2px;background:#4a4a4a"></i></div>
<div id="dialog" class="abs"><i class="fld" style="left:164.5px;top:36px;width:74px;height:19.5px"></i><i class="fld dis" style="left:396px;top:36px;width:73.5px;height:19.5px"></i><i class="btn" style="left:206.5px;top:76px;width:130px;height:18.5px;background:#3a3a3a;box-shadow:inset 0 0 0 1px #333,0 1px 0 #4c4c4c"></i><i class="fld" style="left:93.2px;top:383.8px;width:73.4px;height:19px"></i><i class="fld" style="left:93.2px;top:413.7px;width:73.4px;height:19px"></i><i class="btn" style="left:173.5px;top:413.7px;width:48px;height:19px"></i><i class="fld dis" style="left:353.2px;top:383.8px;width:73.4px;height:19px"></i><i class="fld dis" style="left:353.2px;top:413.7px;width:73.4px;height:19px"></i><i class="btn" style="left:433.5px;top:413.7px;width:48px;height:19px"></i><svg style="left:0;top:0" width="542" height="450" viewBox="1315 169.500 542 450"><path d="M1845 177L1853 185.500M1853 177L1845 185.500" stroke="#f4f4f4" stroke-width="1.500"/><path d="M1328.500 232.800H1843.500" stroke="#303030" stroke-width="1"/><path d="M1328.500 233.800H1843.500" stroke="#4e4e4e" stroke-width="1"/><path d="M1543.8 213.6h6.400l-3.200 3.400z" fill="#f0f0f0"/><path d="M1640.8 253.3h6.400l-3.200 3.400z" fill="#f0f0f0"/><path d="M1713 222.500L1782 208.800" stroke="#d8d8d8" stroke-width="1.100"/><rect x="1332.8" y="293.8" width="248.5" height="248.5" fill="#1b1b1b" stroke="#8a8a8a" stroke-width="1"/><path d="M1395.35 294.3V541.8M1333.3 356.35H1580.8M1457.9 294.3V541.8M1333.3 418.9H1580.8M1520.45 294.3V541.8M1333.3 481.45H1580.8" stroke="#4e4e4e" stroke-width="1" fill="none"/><rect x="1592.4" y="293.8" width="248.5" height="248.5" fill="#1b1b1b" stroke="#8a8a8a" stroke-width="1"/><path d="M1654.95 294.3V541.8M1592.9 356.35H1840.4M1717.5 294.3V541.8M1592.9 418.9H1840.4M1780.05 294.3V541.8M1592.9 481.45H1840.4" stroke="#4e4e4e" stroke-width="1" fill="none"/><path d="M1333 294L1398 423L1581 294" fill="none" stroke="#ececec" stroke-width="1.400"/><path d="M1593 294H1841" fill="none" stroke="#f4f4f4" stroke-width="2"/><circle cx="1333" cy="294" r="4.200" fill="#fff"/><circle cx="1581" cy="294" r="4.200" fill="#fff"/><circle cx="1593" cy="294" r="4.200" fill="#fff"/><circle cx="1841" cy="294" r="4.200" fill="#fff"/><circle cx="1398" cy="423" r="3.600" fill="#000" stroke="#f0f0f0" stroke-width="1.300"/><path d="M1399.500 424.500V438.500L1402.700 435.600L1405 440.800L1407.200 439.800L1405 434.800L1409.300 434.500Z" fill="#fff" stroke="#111" stroke-width="1" stroke-linejoin="round"/><path d="M1472.8 561.1h6.400l-3.200 3.400z" fill="#f0f0f0"/><path d="M1472.8 591.1h6.400l-3.200 3.400z" fill="#f0f0f0"/><rect x="1489.2" y="558.2" width="10" height="10" rx="1.500" fill="#6e6e6e"/><path d="M1491.3 563.6 l2.300 2.600 l3.600 -6.200" fill="none" stroke="#ffffff" stroke-width="1.800"/><path d="M1732.8 561.1h6.400l-3.200 3.400z" fill="#777"/><path d="M1732.8 591.1h6.400l-3.200 3.400z" fill="#777"/><rect x="1749.2" y="558.2" width="10" height="10" rx="1.500" fill="#6e6e6e"/><path d="M1751.3 563.6 l2.300 2.600 l3.600 -6.200" fill="none" stroke="#ffffff" stroke-width="1.800"/></svg><span class="t d" style="transform:scaleX(0.9741);left:231.5px;top:4.6px;font-size:12.500px">Blend Options</span><span class="t d" style="transform:scaleX(0.9472);left:90.5px;top:38.4px;">Blend Gamma:</span><span class="t d" style="transform:scaleX(0.9479);left:169.7px;top:38.4px;">2.2</span><span class="t d" style="transform:scaleX(0.9838);left:314.8px;top:38.4px;">Coverage Map:</span><span class="t d" style="transform:scaleX(0.9814);left:212.6px;top:77.3px;">Master</span><span class="t d" style="transform:scaleX(0.9426);left:14px;top:101.5px;">Source Layer Ranges</span><span class="t d" style="transform:scaleX(0.9921);left:274px;top:101.5px;">Underlying Composition Ranges</span><span class="t d" style="transform:scaleX(0.8828);left:77.6px;top:385.5px;">In:</span><span class="t d" style="transform:scaleX(0.9809);left:68px;top:415.3px;">Out:</span><span class="t d" style="transform:scaleX(0.9431);left:98.8px;top:385.5px;">26.3 %</span><span class="t d" style="transform:scaleX(0.9431);left:98.8px;top:415.3px;">47.9 %</span><span class="t d" style="transform:scaleX(0.9484);left:189.5px;top:385.5px;">Linear</span><span class="t d" style="transform:scaleX(0.9043);left:185.5px;top:415.3px;">Reset</span><span class="t d" style="transform:scaleX(0.8828);left:337.6px;top:385.5px;">In:</span><span class="t d" style="transform:scaleX(0.9809);left:328px;top:415.3px;">Out:</span><span class="t d" style="transform:scaleX(0.8171);left:358.8px;top:385.5px;color:#8a8a8a">0 %</span><span class="t d" style="transform:scaleX(0.8171);left:358.8px;top:415.3px;color:#8a8a8a">0 %</span><span class="t d" style="transform:scaleX(0.9484);left:449.5px;top:385.5px;">Linear</span><span class="t d" style="transform:scaleX(0.9043);left:445.5px;top:415.3px;">Reset</span></div>
</body>
</html>
